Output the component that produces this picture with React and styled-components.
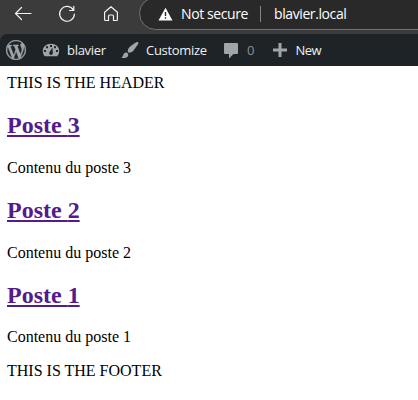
import React from "react";
import styled, { createGlobalStyle } from "styled-components";

const GlobalStyle = createGlobalStyle`
  body { margin: 0; background: #fff; color: #000; overflow: hidden; font: 16px "Liberation Serif", "Times New Roman", serif; }
`;
const Chrome = styled.header`
  height: 66px;
  background: #3b3b3b;
  overflow: hidden;
`;
const Toolbar = styled.div`
  display: flex;
  height: 34px;
  align-items: flex-start;
`;
const Navigation = styled.nav`
  display: flex;
  gap: 24px;
  padding: 4px 0 0 13px;
  width: 126px;
  flex: none;
`;
const NavIcon = styled.svg`
  width: 20px;
  height: 20px;
  flex: none;
  fill: none;
  stroke: #f2f2f2;
  stroke-width: 1.2;
  stroke-linecap: round;
  stroke-linejoin: round;
`;
const AddressBar = styled.div`
  display: flex;
  align-items: center;
  box-sizing: border-box;
  flex: none;
  width: 310px;
  height: 33px;
  margin-top: -3px;
  padding: 1px 0 0 18px;
  background: #292929;
  border: 1px solid #737373;
  border-radius: 17px;
  color: #fff;
`;
const Warning = styled.svg`
  width: 15px;
  height: 14px;
  flex: none;
`;
const AddressText = styled.span`
  font: 14px/20px "Open Sans", "Noto Sans", sans-serif;
  width: ${({ $width }) => $width}px;
  letter-spacing: ${({ $spacing }) => $spacing}px;
  margin-left: ${({ $before }) => $before}px;
  white-space: nowrap;
  flex: none;
`;
const Divider = styled.span`
  width: 1px;
  height: 16px;
  margin-left: 12px;
  background: #858585;
  flex: none;
`;
const AdminBar = styled.div`
  display: flex;
  align-items: center;
  height: 32px;
  padding-left: 6px;
  background: #1d2327;
  border-top-left-radius: 7px;
`;
const AdminItem = styled.div`
  display: flex;
  align-items: center;
  flex: none;
  width: ${({ $width }) => $width}px;
  margin-left: ${({ $before }) => $before || 0}px;
`;
const AdminIcon = styled.svg`
  width: 20px;
  height: 20px;
  fill: #a0a5aa;
  stroke: #a0a5aa;
  stroke-width: ${({ $weight }) => $weight || 0};
  flex: none;
`;
const AdminLabel = styled.span`
  margin-left: 6px;
  font: 13px/32px "Open Sans", "Noto Sans", sans-serif;
  letter-spacing: ${({ $spacing }) => $spacing || 0}px;
  color: ${({ $muted }) => ($muted ? "#8b9095" : "#f0f0f1")};
`;
const Page = styled.main`
  padding: 8px 7px;
  line-height: 18px;
`;
const PostTitle = styled.h2`
  font-size: 24px;
  line-height: 27px;
  margin: 19.92px 0;
`;
const PostLink = styled.a`
  color: #551a8b;
  text-decoration: underline;
`;
const PostContent = styled.p`
  margin: 16px 0;
`;

function Item({ width, before, path, children, spacing, muted }) {
  return (
    <AdminItem $width={width} $before={before}>
      <AdminIcon viewBox="0 0 20 20"><path fillRule="evenodd" d={path} /></AdminIcon>
      <AdminLabel $spacing={spacing} $muted={muted}>{children}</AdminLabel>
    </AdminItem>
  );
}

const wordpress = "M20 10c0-5.51-4.49-10-10-10C4.48 0 0 4.49 0 10c0 5.52 4.48 10 10 10 5.51 0 10-4.48 10-10zM7.78 15.37L4.37 6.22c.55-.02 1.17-.08 1.17-.08.5-.06.44-1.13-.06-1.11 0 0-1.45.11-2.37.11-.18 0-.37 0-.58-.01C4.12 2.69 6.87 1.11 10 1.11c2.33 0 4.45.87 6.05 2.34-.68-.11-1.65.39-1.65 1.58 0 .74.45 1.36.9 2.1.35.61.55 1.36.55 2.46 0 1.49-1.4 5-1.4 5l-3.03-8.37c.54-.02.82-.17.82-.17.5-.05.44-1.25-.06-1.22 0 0-1.44.12-2.38.12-.87 0-2.33-.12-2.33-.12-.5-.03-.56 1.2-.06 1.22l.92.08 1.26 3.41zM17.41 10c.24-.64.74-1.87.43-4.25.7 1.29 1.05 2.71 1.05 4.25 0 3.29-1.73 6.24-4.4 7.78.97-2.59 1.94-5.2 2.92-7.78zM6.1 18.09C3.12 16.65 1.11 13.53 1.11 10c0-1.3.23-2.48.72-3.59C3.25 10.3 4.67 14.2 6.1 18.09zm4.03-6.63l2.58 6.98c-.86.29-1.76.45-2.71.45-.79 0-1.57-.11-2.29-.33.81-2.38 1.62-4.74 2.42-7.1z";
const dashboard = "M3.76 16.3h12.48A7.8 7.8 0 0 0 18.2 11c0-4.3-3.6-7.3-8.2-7.3s-8.2 3-8.2 7.3c0 2 .8 4 1.96 5.3zM9 5h2v2H9zM5 6.3h2v2H5zM13 6.3h2v2h-2zM3 10h2v2H3zM15 10h2v2h-2zM11.4 7.6l.4 5.2a1.8 1.8 0 1 1-3.2-.8z";
const brush = "M18.33 3.57s.27-.8-.31-1.36c-.53-.52-1.22-.24-1.22-.24-.61.3-5.76 3.47-7.67 5.57-.86.96-2.06 3.79-1.09 4.82.92.98 3.96-.17 4.79-1 2.06-2.06 5.21-7.17 5.5-7.79zM1.4 17.65c2.37-1.56 1.46-3.41 3.23-4.64.93-.65 2.22-.62 3.08.29.63.67.8 2.57-.16 3.46-1.57 1.45-4 1.55-6.15.89z";
const comment = "M4 3h12q1 0 1 1v9q0 1-1 1h-3.5L8 18.5V14H4q-1 0-1-1V4q0-1 1-1z";
const plus = "M17 8.5v3h-5.5V17h-3v-5.5H3v-3h5.5V3h3v5.5z";

export default function App() {
  return (
    <>
      <GlobalStyle />
      <Chrome>
        <Toolbar>
          <Navigation>
            <NavIcon viewBox="0 0 20 20"><path d="M18 9.5H2.5M8.5 3.5l-6 6 6 6" /></NavIcon>
            <NavIcon viewBox="0 0 20 20"><path d="M16.4 6.1A7.4 7.4 0 1 0 17.4 10M16.8 2.4v4.1h-4.2" /></NavIcon>
            <NavIcon viewBox="0 0 20 20"><path d="M3.6 8.2 10 2.7l6.4 5.5v7.3q0 1-1 1h-2.9v-4.3q0-1.2-1.2-1.2H8.7q-1.2 0-1.2 1.2v4.3H4.6q-1 0-1-1z" /></NavIcon>
          </Navigation>
          <AddressBar>
            <Warning viewBox="0 0 15 14"><path d="M7.5.8 14.5 13.5H.5z" fill="#fff" /><path d="M7.5 5v4M7.5 10.3v1.5" stroke="#292929" strokeWidth="1.4" /></Warning>
            <AddressText $width={67} $before={8} $spacing={-0.4}>Not secure</AddressText>
            <Divider />
            <AddressText $width={75} $before={13} $spacing={-0.4}>blavier.local</AddressText>
          </AddressBar>
        </Toolbar>
        <AdminBar>
          <AdminIcon viewBox="0 0 20 20" $weight={0.3}><path d={wordpress} /></AdminIcon>
          <Item width={79} before={15} path={dashboard} spacing={-0.3}>blavier</Item>
          <Item width={101} path={brush} spacing={-0.3}>Customize</Item>
          <Item width={48.5} path={comment} muted>0</Item>
          <Item width={60} path={plus} spacing={-0.5}>New</Item>
        </AdminBar>
      </Chrome>
      <Page>
        <div>THIS IS THE HEADER</div>
        {[3, 2, 1].map((number) => (
          <article key={number}>
            <PostTitle><PostLink href="#">Poste {number}</PostLink></PostTitle>
            <PostContent>Contenu du poste {number}</PostContent>
          </article>
        ))}
        <div>THIS IS THE FOOTER</div>
      </Page>
    </>
  );
}
